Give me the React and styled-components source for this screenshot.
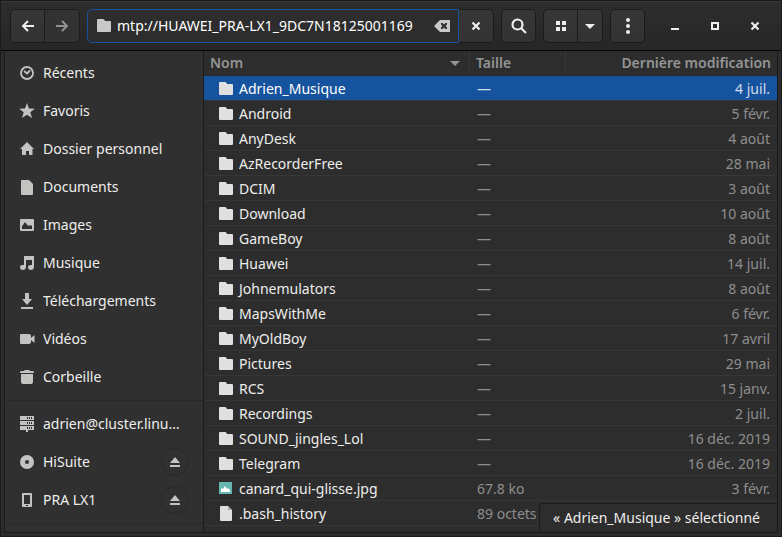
import React from "react";
import styled, { createGlobalStyle, css } from "styled-components";

const Global = createGlobalStyle`
  *, *::before, *::after { box-sizing: border-box; }
  body {
    margin: 0;
    background: #1b1b1b;
    color: #eeeeec;
    font: 14px/20px "Noto Sans", "Open Sans", sans-serif;
  }
  button, input { font: inherit; color: inherit; }
`;

const Window = styled.div`
  display: flex;
  flex-direction: column;
  min-height: 100vh;
  padding: 0 3px 3px;
  background: #2c2c2c;
  border: 1px solid #1b1b1b;
`;

const Toolbar = styled.header`
  display: flex;
  align-items: center;
  height: 50px;
  margin: 0 -3px;
  padding: 0 9px;
  gap: 7px;
  background: linear-gradient(#2e2e2e, #262626);
  border-top: 1px solid #383838;
  border-bottom: 1px solid #070707;
`;

const Group = styled.div`
  display: flex;
  height: 34px;
  flex: ${(p) => (p.$grow ? "1 1 0" : "none")};
  min-width: 0;
`;

const ToolButton = styled.button`
  display: grid;
  place-items: center;
  flex: none;
  width: ${(p) => (p.$narrow ? 25 : 35)}px;
  height: 34px;
  padding: 0;
  color: #eeeeec;
  background: linear-gradient(#373737, #323232);
  border: 1px solid #1b1b1b;
  border-radius: 5px;
  &:disabled { color: #919190; background: #323232; }
  ${Group} > &:not(:first-child) {
    border-left: 0;
    border-top-left-radius: 0;
    border-bottom-left-radius: 0;
  }
  ${Group} > &:not(:last-child) {
    border-top-right-radius: 0;
    border-bottom-right-radius: 0;
  }
`;

const Location = styled.label`
  display: flex;
  align-items: center;
  flex: 1 1 0;
  min-width: 0;
  gap: 5px;
  padding: 0 8px;
  color: #c8c8c6;
  background: #2d2d2d;
  border: 1px solid #15539e;
  border-radius: 5px 0 0 5px;
`;

const PathInput = styled.input`
  flex: 1 1 0;
  min-width: 0;
  padding: 0;
  color: #fff;
  background: none;
  border: 0;
  outline: 0;
`;

const PlainButton = styled.button`
  display: grid;
  place-items: center;
  padding: 0;
  color: inherit;
  background: none;
  border: 0;
`;

const WindowButtons = styled.div`
  display: flex;
  gap: 24px;
  padding: 0 9px 0 15px;
`;

const Body = styled.div`
  display: flex;
  flex: 1;
  border: 1px solid #1b1b1b;
  border-top: 0;
`;

const Sidebar = styled.nav`
  flex: none;
  width: 199px;
  background: #303030;
  border-right: 1px solid #1b1b1b;
`;

const PlaceList = styled.ul`
  margin: 0;
  padding: 3px 0 4px;
  list-style: none;
  & + & { padding-top: 4px; }
  border-bottom: 1px solid #292929;
`;

const Place = styled.li`
  display: flex;
  align-items: center;
  height: 38px;
  padding: 0 14px;
`;

const PlaceLink = styled.a`
  display: flex;
  align-items: center;
  flex: 1;
  min-width: 0;
  gap: 8px;
  color: #eeeeec;
  text-decoration: none;
  svg { color: #c3c3c2; }
`;

const PlaceName = styled.span`
  flex: 1;
  min-width: 0;
  overflow: hidden;
  white-space: nowrap;
  text-overflow: ellipsis;
`;

const Eject = styled.button`
  display: grid;
  place-items: center;
  width: 28px;
  height: 28px;
  padding: 0;
  color: #c3c3c2;
  background: none;
  border: 1px solid #282828;
  border-radius: 50%;
`;

const Content = styled.main`
  position: relative;
  flex: 1;
  min-width: 0;
  background: #2d2d2d;
`;

const FileTable = styled.table`
  width: 100%;
  table-layout: fixed;
  border-collapse: separate;
  border-spacing: 0;
`;

const Heading = styled.th`
  height: 25px;
  width: ${(p) => p.$width || "auto"};
  padding: 0 6px;
  color: #949492;
  font-weight: 600;
  text-align: ${(p) => p.$align || "left"};
  border-bottom: 1px solid #272727;
  & + & { border-left: 1px solid #373737; }
`;

const SortLabel = styled.span`
  display: flex;
  align-items: center;
  justify-content: space-between;
`;

const cell = css`
  height: 25px;
  padding: 2px 7px 0;
  white-space: nowrap;
  border-bottom: 1px solid #363636;
`;

const NameCell = styled.td`
  ${cell}
  padding-left: 14px;
`;

const DetailCell = styled.td`
  ${cell}
  padding-left: 8px;
  color: #8e8e8d;
  text-align: ${(p) => p.$align || "left"};
`;

const FileRow = styled.tr`
  ${(p) =>
    p.$selected &&
    css`
      td { background: #15539e; background-clip: padding-box; color: #fff; }
      ${DetailCell} { color: #d0ddec; }
    `}
`;

const FileName = styled.span`
  display: flex;
  align-items: center;
  gap: 5px;
  svg { color: #e0e0e0; }
`;

const Status = styled.div`
  position: absolute;
  right: 0;
  bottom: 0;
  padding: 4px 17px 4px 13px;
  background: #2d2d2d;
  border: 1px solid #1b1b1b;
  border-width: 1px 0 0 1px;
  border-radius: 4px 0 0 0;
`;

const Glyph = styled.svg`
  flex: none;
  display: block;
  fill: currentColor;
`;

const drawings = {
  back: <path d="M8 3 3 8l5 5M3.500 8H14" fill="none" stroke="currentColor" strokeWidth="2" />,
  forward: <path d="m8 3 5 5-5 5M12.500 8H2" fill="none" stroke="currentColor" strokeWidth="2" />,
  folder: <path d="M2 1h5q1 0 1.500 1l.500 1h5q1 0 1 1v9q0 1-1 1H2q-1 0-1-1V2q0-1 1-1Z" />,
  clear: <path fillRule="evenodd" d="M6 2h10v12H6L0 8ZM7 5v1.500L8.500 8 7 9.500V11h1.500L10 9.500l1.500 1.500H13V9.500L11.500 8 13 6.500V5h-1.500L10 6.500 8.500 5Z" />,
  close: <path d="m4.500 4.500 7 7m0-7-7 7" fill="none" stroke="currentColor" strokeWidth="2.200" />,
  search: <path d="M10.500 10.500 15 15M11.500 6.500a5 5 0 1 1-10 0 5 5 0 0 1 10 0Z" fill="none" stroke="currentColor" strokeWidth="2.200" />,
  grid: <path d="M3 3h4v4H3zM9 3h4v4H9zM3 9h4v4H3zM9 9h4v4H9z" />,
  down: <path d="M3 6h10l-5 5Z" />,
  menu: <path d="M8 0a2 2 0 1 0 0 4 2 2 0 0 0 0-4Zm0 6a2 2 0 1 0 0 4 2 2 0 0 0 0-4Zm0 6a2 2 0 1 0 0 4 2 2 0 0 0 0-4Z" />,
  minimize: <path d="M4 10h8v2H4z" />,
  maximize: <path d="M5 5h6v6H5z" fill="none" stroke="currentColor" strokeWidth="2" />,
  recent: <path d="M8 2a6 6 0 1 0 0 12A6 6 0 0 0 8 2ZM5 6l3 2.500 3-3" fill="none" stroke="currentColor" strokeWidth="1.800" />,
  star: <path d="m8 0 2 5.500 5.800.200-4.500 3.600L13 15l-5-3.300L3 15l1.700-5.700L.200 5.700 6 5.500Z" />,
  home: <path d="m8 1 7 7h-1.500v6H10v-4H7v4H3V8H1Z" />,
  document: <path d="M3 1h7l4 4v10q0 1-1 1H3q-1 0-1-1V2q0-1 1-1Z" />,
  image: <path fillRule="evenodd" d="M2 2h12q1 0 1 1v10q0 1-1 1H2q-1 0-1-1V3q0-1 1-1Zm1 10h10V9l-1-1-1 1-1-1-1 1-3-4-2 3-1 1Z" />,
  music: <path d="M5 1h10v11q-.300 3-3 3t-3-2.500 3-2.500h1V5H7v7q-.300 3-3 3t-3-2.500T3.500 10H5Z" />,
  download: <path d="M6 0h4v6h3l-5 6-5-6h3ZM2 14h12v2H2Z" />,
  video: <path d="M2 3h8q2 0 2 2v2l3.500-3v8L12 9v2q0 2-2 2H2q-1 0-1-1V4q0-1 1-1Z" />,
  trash: <path d="M6 1h4l1 1h3q1 .500 1 2H1q0-1.500 1-2h3ZM2 5h12v8q0 2-2 2H4q-2 0-2-2Z" />,
  server: <path fillRule="evenodd" d="M1 0h14v4H1Zm7 1v2h1V1Zm2 0v2h1V1Zm2 0v2h1V1ZM1 5h14v4H1Zm7 1v2h1V6Zm2 0v2h1V6Zm2 0v2h1V6ZM1 10h14v4H9v2H7v-2H1Zm7 1v2h1v-2Zm2 0v2h1v-2Zm2 0v2h1v-2Z" />,
  disc: <path fillRule="evenodd" d="M8 1a7 7 0 1 0 0 14A7 7 0 0 0 8 1Zm0 5a2 2 0 1 1 0 4 2 2 0 0 1 0-4Z" />,
  phone: <path fillRule="evenodd" d="M4 1h8q1 0 1 1v12q0 1-1 1H4q-1 0-1-1V2q0-1 1-1Zm1 2v9h6V3Zm2 10v1h2v-1Z" />,
  eject: <path d="m8 3 5 6H3ZM3 11h10v2H3Z" />,
  picture: (
    <>
      <path fill="#65b7b0" d="M1 1h13v12H1Z" />
      <path fill="#fff" d="M3 11V8l1-1 1 1 2-3 2 3 1-1 2 2v2Z" />
    </>
  ),
  file: (
    <>
      <path d="M3 0h7l4 4v10q0 1-1 1H3q-1 0-1-1V1q0-1 1-1Z" />
      <path fill="#a9a9a9" d="M10 0v4h4Z" />
    </>
  ),
};

const Icon = ({ name }) => (
  <Glyph width="16" height="16" viewBox="0 0 16 16" aria-hidden="true">
    {drawings[name]}
  </Glyph>
);

const places = [
  ["recent", "Récents"],
  ["star", "Favoris"],
  ["home", "Dossier personnel"],
  ["document", "Documents"],
  ["image", "Images"],
  ["music", "Musique"],
  ["download", "Téléchargements"],
  ["video", "Vidéos"],
  ["trash", "Corbeille"],
];

const devices = [
  ["server", "adrien@cluster.linu…"],
  ["disc", "HiSuite", true],
  ["phone", "PRA LX1", true],
];

const files = [
  ["Adrien_Musique", "4 juil."],
  ["Android", "5 févr."],
  ["AnyDesk", "4 août"],
  ["AzRecorderFree", "28 mai"],
  ["DCIM", "3 août"],
  ["Download", "10 août"],
  ["GameBoy", "8 août"],
  ["Huawei", "14 juil."],
  ["Johnemulators", "8 août"],
  ["MapsWithMe", "6 févr."],
  ["MyOldBoy", "17 avril"],
  ["Pictures", "29 mai"],
  ["RCS", "15 janv."],
  ["Recordings", "2 juil."],
  ["SOUND_jingles_Lol", "16 déc. 2019"],
  ["Telegram", "16 déc. 2019"],
  ["canard_qui-glisse.jpg", "3 févr.", "67.8 ko", "picture"],
  [".bash_history", "", "89 octets", "file"],
];

const Places = ({ items }) => (
  <PlaceList>
    {items.map(([icon, label, ejectable]) => (
      <Place key={label}>
        <PlaceLink href="#">
          <Icon name={icon} />
          <PlaceName>{label}</PlaceName>
        </PlaceLink>
        {ejectable && (
          <Eject aria-label={`Éjecter ${label}`}>
            <Icon name="eject" />
          </Eject>
        )}
      </Place>
    ))}
  </PlaceList>
);

export default function App() {
  return (
    <>
      <Global />
      <Window>
        <Toolbar>
          <Group>
            <ToolButton aria-label="Précédent"><Icon name="back" /></ToolButton>
            <ToolButton aria-label="Suivant" disabled><Icon name="forward" /></ToolButton>
          </Group>
          <Group $grow>
            <Location>
              <Icon name="folder" />
              <PathInput aria-label="Emplacement" defaultValue="mtp://HUAWEI_PRA-LX1_9DC7N18125001169" />
              <PlainButton aria-label="Effacer"><Icon name="clear" /></PlainButton>
            </Location>
            <ToolButton aria-label="Fermer la saisie"><Icon name="close" /></ToolButton>
          </Group>
          <ToolButton aria-label="Rechercher"><Icon name="search" /></ToolButton>
          <Group>
            <ToolButton aria-label="Vue en grille"><Icon name="grid" /></ToolButton>
            <ToolButton $narrow aria-label="Options d’affichage"><Icon name="down" /></ToolButton>
          </Group>
          <ToolButton aria-label="Menu"><Icon name="menu" /></ToolButton>
          <WindowButtons>
            <PlainButton aria-label="Réduire"><Icon name="minimize" /></PlainButton>
            <PlainButton aria-label="Agrandir"><Icon name="maximize" /></PlainButton>
            <PlainButton aria-label="Fermer"><Icon name="close" /></PlainButton>
          </WindowButtons>
        </Toolbar>
        <Body>
          <Sidebar>
            <Places items={places} />
            <Places items={devices} />
          </Sidebar>
          <Content>
            <FileTable>
              <thead>
                <tr>
                  <Heading><SortLabel>Nom<Icon name="down" /></SortLabel></Heading>
                  <Heading $width="96px">Taille</Heading>
                  <Heading $width="212px" $align="right">Dernière modification</Heading>
                </tr>
              </thead>
              <tbody>
                {files.map(([name, date, size = "—", icon = "folder"], i) => (
                  <FileRow key={name} $selected={i === 0}>
                    <NameCell><FileName><Icon name={icon} />{name}</FileName></NameCell>
                    <DetailCell>{size}</DetailCell>
                    <DetailCell $align="right">{date}</DetailCell>
                  </FileRow>
                ))}
              </tbody>
            </FileTable>
            <Status role="status">« Adrien_Musique » sélectionné</Status>
          </Content>
        </Body>
      </Window>
    </>
  );
}
